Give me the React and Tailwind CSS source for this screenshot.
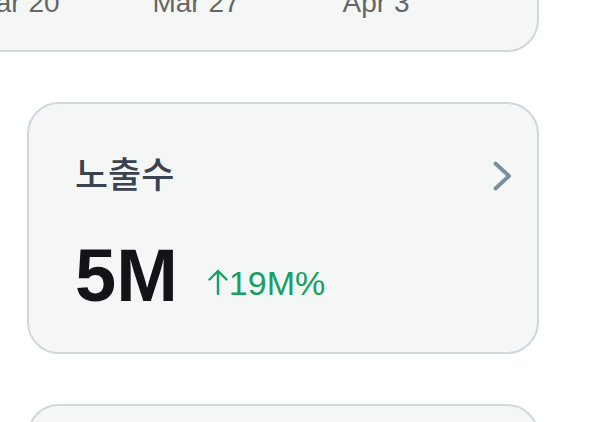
import React from "react";

const ChevronRight = () => (
  <svg width="20" height="32" viewBox="0 0 20 32" fill="none">
    <path
      d="M3.5 3.5 L17 16 L3.5 28.5"
      stroke="#78909c"
      strokeWidth="3.8"
      strokeLinecap="round"
      strokeLinejoin="round"
    />
  </svg>
);

const ArrowUp = () => (
  <svg width="20" height="26" viewBox="0 0 20 26" fill="none">
    <path
      d="M10 2 L10 25 M1.5 10.5 L10 2 L18.5 10.5"
      stroke="#16a062"
      strokeWidth="2.4"
      strokeLinecap="round"
      strokeLinejoin="round"
    />
  </svg>
);

const axisLabels = ["Mar 20", "Mar 27", "Apr 3"];

// chart card: only its bottom edge is on screen
const ChartCard = () => (
  <div className="ml-[-127px] w-[639px] rounded-[32px] border-2 border-[#cfd8dc] bg-[#f5f7f7] pl-[24px] pt-[24px] pb-[33px]">
    <div className="h-[161px]" />
    <div className="flex">
      {axisLabels.map((label) => (
        <div
          key={label}
          className="w-[180px] text-center text-[28px] leading-none text-[#666666]"
        >
          {label}
        </div>
      ))}
    </div>
  </div>
);

const StatCard = ({ title, value, change }) => (
  <div className="w-[512px] rounded-[32px] border-2 border-[#cfd8dc] bg-[#f5f7f7] pl-[46px] pr-[25px] pt-[48px] pb-[39px]">
    <div className="flex items-center justify-between">
      <span
        className="text-[36px] font-medium leading-none text-[#3a4350]"
        style={{ fontFamily: '"Noto Sans CJK KR", "Noto Sans", sans-serif' }}
      >
        {title}
      </span>
      <span className="mt-[8px]">
        <ChevronRight />
      </span>
    </div>
    <div className="mt-[47px] flex items-end">
      <span className="text-[74px] font-bold leading-none text-[#121417]">
        {value}
      </span>
      <span className="ml-[30px] mb-[13px] flex items-end text-[34px] leading-none text-[#16a062]">
        <span className="mb-[5px] mr-[1px]">
          <ArrowUp />
        </span>
        {change}
      </span>
    </div>
  </div>
);

export default function App() {
  return (
    <div
      className="h-[422px] w-full overflow-hidden bg-white"
      style={{ fontFamily: '"Liberation Sans", Arial, sans-serif' }}
    >
      <div className="mt-[-198px] flex flex-col gap-[50px] pl-[27px]">
        <ChartCard />
        <StatCard title="노출수" value="5M" change="19M%" />
        <StatCard title="클릭수" value="12K" change="8%" />
      </div>
    </div>
  );
}
